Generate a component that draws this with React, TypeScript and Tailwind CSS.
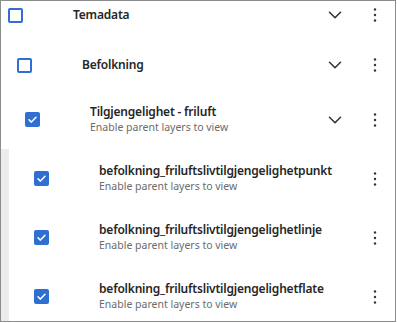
import { ChevronDown } from 'lucide-react';

type Layer = {
  id: string;
  title: string;
  subtitle?: string;
  checked: boolean;
  expandable?: boolean;
  children?: Layer[];
};

const tree: Layer = {
  id: 'temadata',
  title: 'Temadata',
  checked: false,
  expandable: true,
  children: [
    {
      id: 'befolkning',
      title: 'Befolkning',
      checked: false,
      expandable: true,
      children: [
        {
          id: 'tilgjengelighet',
          title: 'Tilgjengelighet - friluft',
          subtitle: 'Enable parent layers to view',
          checked: true,
          expandable: true,
          children: [
            {
              id: 'punkt',
              title: 'befolkning_friluftslivtilgjengelighetpunkt',
              subtitle: 'Enable parent layers to view',
              checked: true,
            },
            {
              id: 'linje',
              title: 'befolkning_friluftslivtilgjengelighetlinje',
              subtitle: 'Enable parent layers to view',
              checked: true,
            },
            {
              id: 'flate',
              title: 'befolkning_friluftslivtilgjengelighetflate',
              subtitle: 'Enable parent layers to view',
              checked: true,
            },
          ],
        },
      ],
    },
  ],
};

const Checkbox = ({ checked }: { checked: boolean }) =>
  checked ? (
    <span className="flex h-[15px] w-[15px] shrink-0 items-center justify-center rounded-[2px] bg-[#2f6fd1]">
      <svg width="11" height="11" viewBox="0 0 12 12" fill="none">
        <path d="M2.2 6.3 4.8 8.8 9.8 3.6" stroke="white" strokeWidth="1.7" strokeLinecap="round" strokeLinejoin="round" />
      </svg>
    </span>
  ) : (
    <span className="h-[15px] w-[15px] shrink-0 rounded-[2px] border-2 border-[#2f6fd1] bg-white" />
  );

const Kebab = () => (
  <svg width="6" height="16" viewBox="0 0 6 16" className="text-[#333]">
    <circle cx="3" cy="2.5" r="1.2" fill="currentColor" />
    <circle cx="3" cy="8" r="1.2" fill="currentColor" />
    <circle cx="3" cy="13.5" r="1.2" fill="currentColor" />
  </svg>
);

// left padding of the checkbox for each depth (inside the panel border)
const indent = ['pl-[7px]', 'pl-[16px]', 'pl-[24px]', 'pl-[25px]'];
const rowHeight = ['h-[50px]', 'h-[50px]', 'h-[59px]', 'h-[59px]'];

const Row = ({ layer, depth }: { layer: Layer; depth: number }) => (
  <div className={`flex items-center pr-[17px] ${indent[depth]} ${rowHeight[depth]}`}>
    <Checkbox checked={layer.checked} />
    <div className="ml-[50px] flex min-w-0 flex-1 flex-col">
      <span className="text-[12px] font-semibold leading-[16px] tracking-[-0.2px] text-[#262626]">
        {layer.title}
      </span>
      {layer.subtitle && (
        <span className="text-[10.5px] leading-[15px] text-[#6b6b6b]">{layer.subtitle}</span>
      )}
    </div>
    <div className="flex w-[22px] justify-center">
      {layer.expandable && <ChevronDown size={22} strokeWidth={1.7} className="text-[#333]" />}
    </div>
    <div className="ml-[26px] flex w-[6px] justify-center">
      <Kebab />
    </div>
  </div>
);

const Node = ({ layer, depth }: { layer: Layer; depth: number }) => {
  const leafParent = layer.children?.every((c) => !c.children);
  return (
    <div>
      <Row layer={layer} depth={depth} />
      {layer.children && (
        <div className={leafParent ? 'border-l-[8px] border-[#ececec]' : ''}>
          {layer.children.map((c) => (
            <Node key={c.id} layer={c} depth={depth + 1} />
          ))}
        </div>
      )}
    </div>
  );
};

export default function App() {
  return (
    <div
      className="h-[323px] w-[397px] bg-white"
      style={{ fontFamily: '"Segoe UI", "Noto Sans", "Open Sans", sans-serif' }}
    >
      <div className="h-[322px] w-[396px] overflow-hidden border border-[#8c8c8c]">
        <div className="-mt-[11px]">
          <Node layer={tree} depth={0} />
        </div>
      </div>
    </div>
  );
}
